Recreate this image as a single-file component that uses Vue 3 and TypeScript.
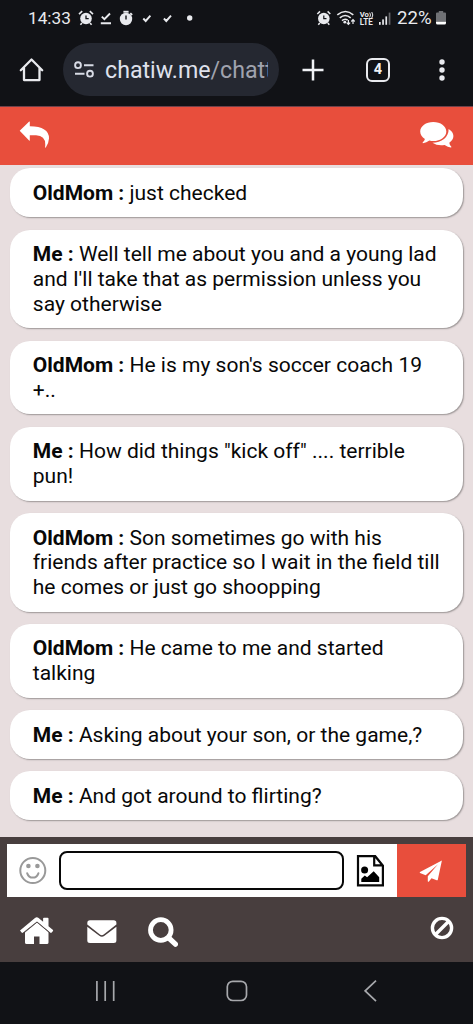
<script setup lang="ts">
interface Message {
  from: string
  text: string
}

const messages: Message[] = [
  { from: 'OldMom', text: 'just checked' },
  { from: 'Me', text: "Well tell me about you and a young lad\nand I'll take that as permission unless you\nsay otherwise" },
  { from: 'OldMom', text: "He is my son's soccer coach 19\n+.." },
  { from: 'Me', text: 'How did things "kick off" .... terrible\npun!' },
  { from: 'OldMom', text: 'Son sometimes go with his\nfriends after practice so I wait in the field till\nhe comes or just go shoopping' },
  { from: 'OldMom', text: 'He came to me and started\ntalking' },
  { from: 'Me', text: 'Asking about your son, or the game,?' },
  { from: 'Me', text: 'And got around to flirting?' },
]
</script>

<template>
  <div class="phone">
    <div class="status">
      <span class="clock">14:33</span>
      <svg class="notices" width="120" height="18" viewBox="78 9 120 18">
        <g fill="#e9eaee">
          <circle cx="86" cy="18.5" r="5.8" />
          <path d="M79 14.2l3.2-3M93 14.2l-3.2-3M82 23l-1.6 1.8M90 23l1.6 1.8" stroke="#e9eaee" stroke-width="1.6" />
          <circle cx="126" cy="19" r="6.2" />
          <rect x="123.4" y="10.8" width="5.2" height="1.9" />
          <path d="M130.3 13.2l1.8 1.8" stroke="#e9eaee" stroke-width="1.8" />
          <circle cx="189.7" cy="18" r="2.7" />
        </g>
        <path d="M86 15.4v3.3h2.7" fill="none" stroke="#111216" stroke-width="1.3" />
        <path d="M126 15.6v4" stroke="#111216" stroke-width="1.4" />
        <g fill="none" stroke="#e9eaee" stroke-width="1.9">
          <path d="M101.8 16.6l2.6 2.6 5.6-5.7M100.8 23.2h10.2" />
          <path d="M143.3 18.5l2.4 2.5 4.7-5.3M163.9 18.5l2.4 2.5 4.7-5.3" />
        </g>
      </svg>
      <svg class="signals" width="78" height="18" viewBox="316 9 78 18">
        <circle cx="323.8" cy="18.5" r="5.8" fill="#e9eaee" />
        <path d="M317.3 14l2.7-2.6M330.3 14l-2.7-2.6M319.8 23l-1.5 1.8M327.8 23l1.5 1.8" stroke="#e9eaee" stroke-width="1.5" />
        <path d="M323.8 15.4v3.3h2.7" fill="none" stroke="#111216" stroke-width="1.2" />
        <g fill="none" stroke="#e9eaee" stroke-width="1.6">
          <path d="M337.3 14.8q8.2-6.6 16 0M339.8 17.8q5.4-4.600 10.900 0M342 20.600q3-2.400 5.600-.4" />
          <path d="M348.400 20v4.200M346.700 22.600l1.700 1.800 1.700-1.800M353 24v-4.200M351.300 21.500l1.700-1.800 1.700 1.800" stroke-width="1.200" />
        </g>
        <circle cx="344.800" cy="22.200" r="1.400" fill="#e9eaee" />
        <g fill="#e9eaee" font-family="Roboto, sans-serif" font-weight="700">
          <text x="359.700" y="17.400" font-size="7.400" textLength="9.200" lengthAdjust="spacingAndGlyphs">Vo</text>
          <text x="359.700" y="25" font-size="8.600" textLength="13" lengthAdjust="spacingAndGlyphs">LTE</text>
        </g>
        <path d="M369.700 12.600q1.600 2.400 0 4.800M371.800 12q2 3 0 6" fill="none" stroke="#e9eaee" stroke-width="1" />
        <g fill="#e9eaee">
          <rect x="379" y="22" width="1.700" height="2.800" />
          <rect x="382.200" y="19.400" width="1.700" height="5.400" />
          <rect x="385.400" y="16.400" width="1.700" height="8.400" />
          <rect x="388.700" y="12.600" width="1.700" height="12.200" fill="#66676b" />
        </g>
      </svg>
      <span class="percent">22%</span>
      <svg class="battery" width="10" height="14" viewBox="0 0 10 14">
        <path d="M2.800 0h4.400v1.400H9q1 0 1 1V10H0V2.400q0-1 1-1h1.800z" fill="#707175" />
        <path d="M0 10.500h10V12q0 1.500-1.500 1.500h-7Q0 13.500 0 12z" fill="#fff" />
      </svg>
    </div>

    <div class="browser">
      <svg class="home" width="26" height="26" viewBox="19 57 26 26">
        <path d="M20.800 70.200L31.500 59.500 42.200 70.200M24 68v12.100h15.500V68" fill="none" stroke="#e9eaee" stroke-width="2.300" stroke-linejoin="round" stroke-linecap="round" />
      </svg>
      <div class="address">
        <svg width="22" height="20" viewBox="73 60 22 20" fill="none" stroke="#d8dbe5" stroke-width="1.900">
          <circle cx="78" cy="65.200" r="2.900" />
          <circle cx="90" cy="73.700" r="2.900" />
          <path d="M84 65.200h9.500M75 73.700h9.500" />
        </svg>
        <div class="url">chatiw.me<span>/chatt</span></div>
      </div>
      <svg class="plus" width="22" height="22" viewBox="0 0 22 22">
        <path d="M11 .5v21M.5 11h21" stroke="#f0f1f5" stroke-width="2.500" />
      </svg>
      <div class="tabs">4</div>
      <svg class="dots" width="6" height="22" viewBox="0 0 6 22" fill="#e9eaee">
        <circle cx="3" cy="3" r="2.700" />
        <circle cx="3" cy="11" r="2.700" />
        <circle cx="3" cy="19" r="2.700" />
      </svg>
    </div>

    <header class="header">
      <svg width="31" height="28" viewBox="19 120 31 28">
        <path d="M19.700 130.800L29.200 121.500Q29.800 121.100 29.800 122V126.200Q49.200 126.500 49 138.500Q48.800 143 45.800 147.600Q45.200 148.200 45.100 147Q46.500 135.600 36 135.300H29.800V140.200Q29.800 141 29.100 140.500Z" fill="#fff" />
      </svg>
      <svg class="talk" width="34" height="28" viewBox="420 122 34 28" fill="#fff">
        <path d="M433.300 123c7.300 0 13 4.200 13 9.500s-5.700 9.600-13 9.600q-2 0-3.900-.5-2.900 2.200-6.400 2.600-.8-.2-.2-1 1.700-1.400 2.100-3.200c-2.800-1.700-4.700-4.500-4.700-7.500 0-5.300 5.800-9.500 13.100-9.500z" />
        <path d="M448.600 130c2.900 1.700 4.800 4.300 4.800 7 0 2.800-1.600 5-4.100 6.700q.2 2.200 1.900 3.700.6.900-.3 1.100-3-.2-6.300-2.500-6.700 1.300-12.200-2.200c9.200 0 16.500-5.800 16.200-13.800z" />
      </svg>
    </header>

    <main class="chat">
      <div v-for="(message, i) in messages" :key="i" class="bubble"><b>{{ message.from }} :</b> {{ message.text }}</div>
    </main>

    <footer class="footer">
      <div class="composer">
        <svg class="smile" width="28" height="28" viewBox="19 856 28 28" fill="none" stroke="#999" stroke-width="2">
          <circle cx="32.800" cy="869.500" r="12.500" />
          <path d="M27.200 872.300q1.500 4.300 5.600 4.300t5.600-4.300" stroke-linecap="round" />
          <circle cx="28.400" cy="865" r="2.300" fill="#999" stroke="none" />
          <circle cx="37.400" cy="865" r="2.300" fill="#999" stroke="none" />
        </svg>
        <input class="field" type="text" />
        <svg class="picture" width="28" height="32" viewBox="356 854 28 32">
          <path d="M358 855.200h17.200l7.700 9.500v19.600H358zM374.200 855.200v9.200h8.700" fill="none" stroke="#080808" stroke-width="2.200" />
          <circle cx="364.600" cy="869" r="3.500" />
          <path d="M361.300 881v-3.200l3.500-3.200 2.300 1.700 6.600-6.100 5.500 6v4.800z" />
        </svg>
        <button class="send">
          <svg width="24" height="24" viewBox="419 858 24 24" fill="#fff">
            <path d="M441.900 859.600L420 871.100q-.6.400 0 .9l5.700 2.300L438 863.300 427.800 875.300V880.200q.3 1.100 1.100.2l2.600-3.200 5.200 2.100q.9.300 1.100-.6z" />
          </svg>
        </button>
      </div>
      <div class="tools">
        <svg class="house" width="34" height="28" viewBox="20 917 34 28" fill="#fff">
          <path d="M37 922.300L48.500 932V942.400q0 1.700-1.600 1.700H39.500V936.500H34V944.100H26.600q-1.600 0-1.600-1.700V932z" />
          <path d="M20 930.500L35 918q1.800-1.400 3.600 0l4.500 3.700V918.600q0-.9.900-.9h3.600q.9 0 .9.900v7.700l4.200 3.500q.8.700.1 1.400l-1.100 1.300q-.7.800-1.500.1L37 921.500 23.100 932.600q-.8.700-1.500-.1l-1-1.300q-.6-.8-.6-.7z" />
          <path d="M23.800 933.100L37 922.200 50 933.100" fill="none" stroke="#483e3e" stroke-width=".8" />
        </svg>
        <svg class="mail" width="30" height="24" viewBox="86.500 920 30 24" fill="#fff">
          <path d="M89.500 920.200h23.700q2.700 0 2.700 2.700v1.600L103.200 934.500q-1.900 1.400-3.800 0L86.800 924.500V922.900q0-2.700 2.700-2.700z" />
          <path d="M86.800 926.800l12 9q2.600 1.800 5.200 0l11.900-9V940.500q0 2.500-2.700 2.500H89.500q-2.700 0-2.700-2.500z" />
        </svg>
        <svg class="search" width="30" height="30" viewBox="148 916.500 30 30" fill="none" stroke="#fff">
          <circle cx="160.800" cy="929.500" r="10.300" stroke-width="4.800" />
          <path d="M168.800 937.500l6.600 6.200" stroke-width="5.200" stroke-linecap="round" />
        </svg>
        <svg class="ban" width="24" height="24" viewBox="430 916 24 24" fill="none" stroke="#fff" stroke-width="3.400">
          <circle cx="442" cy="928" r="9.600" />
          <path d="M435.500 934.500l13-13" />
        </svg>
      </div>
    </footer>

    <nav class="system">
      <svg class="recents" width="20" height="22" viewBox="95 980 20 22" stroke="#a7a8ac" stroke-width="1.700">
        <path d="M96.900 981v20M105.200 981v20M113.700 981v20" />
      </svg>
      <svg class="homekey" width="22" height="22" viewBox="0 0 22 22" fill="none" stroke="#a7a8ac" stroke-width="1.700">
        <rect x="1.300" y="1.300" width="19.200" height="19.200" rx="5.500" />
      </svg>
      <svg class="backkey" width="13" height="22" viewBox="364 980 13 22" fill="none" stroke="#a7a8ac" stroke-width="1.700">
        <path d="M376 980.700L365.200 990.900 376 1001.200" />
      </svg>
    </nav>
  </div>
</template>

<style>
body {
  margin: 0;
}
</style>

<style scoped>
.phone {
  width: 473px;
  height: 1024px;
  display: flex;
  flex-direction: column;
  overflow: hidden;
  background: #111216;
  font-family: Roboto, sans-serif;
}
svg {
  display: block;
  flex: none;
}
.status {
  height: 36px;
  display: flex;
  align-items: center;
  padding-left: 28px;
  color: #e9eaee;
  line-height: 36px;
  box-sizing: border-box;
}
.clock {
  width: 50px;
  font-size: 17.2px;
}
.signals {
  margin-left: 118px;
}
.percent {
  width: 40px;
  margin-left: 3px;
  font-size: 18.6px;
}
.battery {
  margin-left: -1px;
}
.browser {
  height: 71px;
  display: flex;
  align-items: center;
  padding: 0 0 3px 19px;
  border-bottom: 1px solid #70414a;
  box-sizing: border-box;
}
.address {
  width: 216px;
  height: 53px;
  margin-left: 18px;
  padding-left: 10px;
  display: flex;
  align-items: center;
  box-sizing: border-box;
  border-radius: 27px;
  background: #252831;
}
.url {
  width: 163px;
  margin-left: 10px;
  overflow: hidden;
  white-space: nowrap;
  color: #dfe1ec;
  font-size: 23.2px;
  line-height: 34px;
}
.url span {
  color: #a0a3ae;
}
.plus {
  margin-left: 23px;
}
.tabs {
  width: 24px;
  height: 24px;
  margin-left: 42px;
  box-sizing: border-box;
  border: 2px solid #e9eaee;
  border-radius: 6px;
  color: #f0f1f5;
  font-size: 14.5px;
  font-weight: 700;
  line-height: 20px;
  text-align: center;
}
.dots {
  margin-left: 49px;
}
.header {
  height: 58px;
  display: flex;
  justify-content: space-between;
  align-items: flex-start;
  padding: 13px 19px 0;
  box-sizing: border-box;
  background: #e84e3c;
}
.talk {
  margin-top: 1px;
}
.chat {
  height: 672px;
  display: flex;
  flex-direction: column;
  gap: 12.3px;
  padding: 3.2px 10.4px 0 10.2px;
  box-sizing: border-box;
  background: #e8dedf;
}
.bubble {
  padding: 12.65px 22.6px 11.65px;
  border-radius: 20px;
  background: #fff;
  box-shadow: 1px 1px 1.5px #9c9696;
  color: #080808;
  font-size: 21.02px;
  line-height: 24.8px;
  white-space: pre;
}
.footer {
  height: 125px;
  padding: 7px 7px 0 6.5px;
  box-sizing: border-box;
  background: #483e3e;
}
.composer {
  display: flex;
  align-items: center;
  height: 53px;
  background: #fff;
}
.smile {
  margin-left: 12.5px;
}
.field {
  width: 285px;
  height: 39px;
  margin-left: 12px;
  padding: 0 8px;
  box-sizing: border-box;
  border: 2px solid #080808;
  border-radius: 8px;
  background: #fff;
  outline: none;
  font: inherit;
  font-size: 20px;
}
.picture {
  margin-left: 12px;
}
.send {
  width: 69.5px;
  height: 53px;
  margin-left: auto;
  padding: 0;
  display: flex;
  align-items: center;
  justify-content: center;
  border: 0;
  background: #e84e3c;
}
.tools {
  display: flex;
  align-items: flex-start;
  padding: 20px 12px 0 13.5px;
}
.mail {
  margin: 3px 0 0 32.5px;
}
.search {
  margin-left: 31.5px;
}
.ban {
  margin: -1px 0 0 auto;
}
.system {
  height: 62px;
  display: flex;
  align-items: flex-start;
  padding: 18px 0 0 95px;
  box-sizing: border-box;
}
.homekey {
  margin-left: 111px;
}
.backkey {
  margin-left: 116px;
}
</style>
